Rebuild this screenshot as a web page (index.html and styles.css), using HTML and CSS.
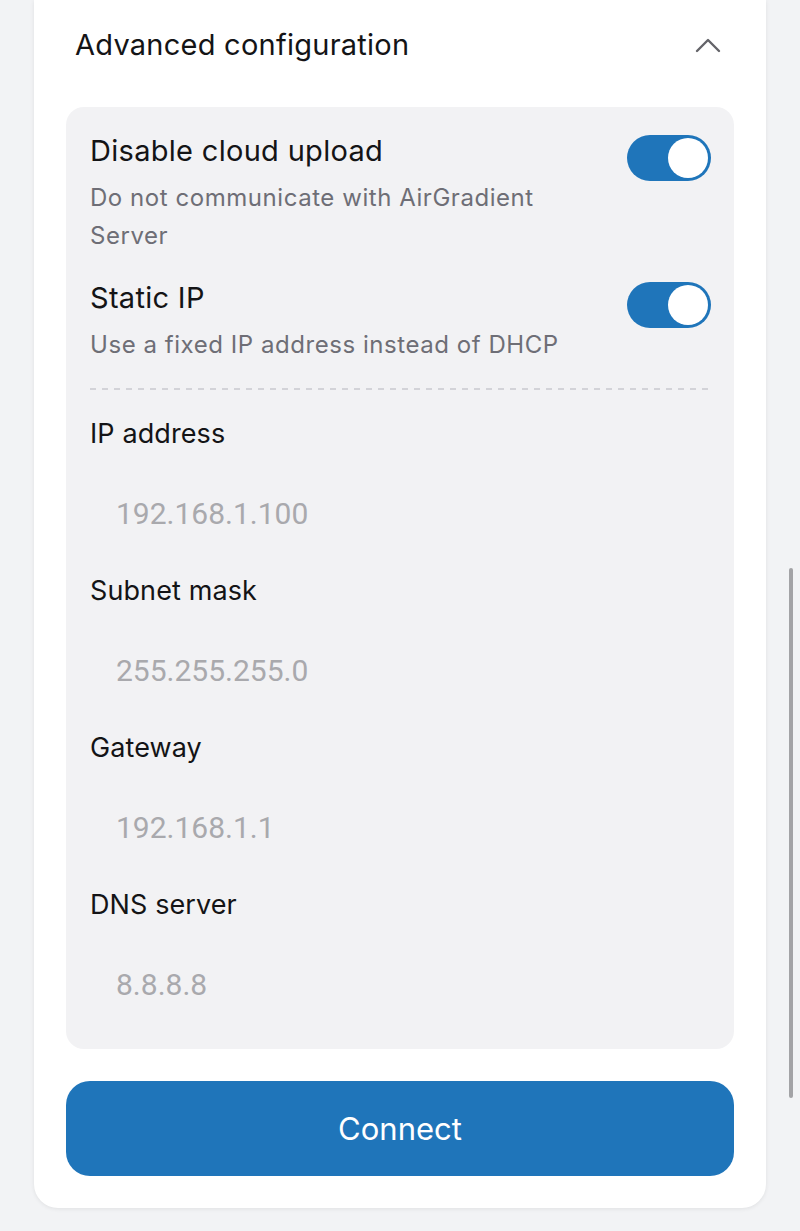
FILE: index.html
```html
<!DOCTYPE html>
<html lang="en">
<head>
  <meta charset="UTF-8" />
  <title>Advanced configuration</title>
  <link rel="stylesheet" href="styles.css">
</head>
<body>
  <div class="card">
    <div class="section-head">
      <span class="section-title">Advanced configuration</span>
      <svg class="chevron" width="26" height="18" viewBox="0 0 26 18">
        <path d="M2 15 L13 4 L24 15" fill="none" stroke="#646469" stroke-width="2.4" stroke-linecap="round" stroke-linejoin="round"/>
      </svg>
    </div>

    <div class="panel">
      <div class="setting">
        <div class="setting-text">
          <div class="setting-title">Disable cloud upload</div>
          <div class="setting-desc">Do not communicate with AirGradient Server</div>
        </div>
        <div class="toggle on"><span class="knob"></span></div>
      </div>

      <div class="setting second">
        <div class="setting-text">
          <div class="setting-title">Static IP</div>
          <div class="setting-desc">Use a fixed IP address instead of DHCP</div>
        </div>
        <div class="toggle on"><span class="knob"></span></div>
      </div>

      <div class="divider"></div>

      <div class="field">
        <label class="field-label">IP address</label>
        <input class="field-input" type="text" placeholder="192.168.1.100">
      </div>
      <div class="field">
        <label class="field-label">Subnet mask</label>
        <input class="field-input" type="text" placeholder="255.255.255.0">
      </div>
      <div class="field">
        <label class="field-label">Gateway</label>
        <input class="field-input" type="text" placeholder="192.168.1.1">
      </div>
      <div class="field">
        <label class="field-label">DNS server</label>
        <input class="field-input" type="text" placeholder="8.8.8.8">
      </div>
    </div>

    <button class="connect">Connect</button>
  </div>

  <div class="scrollbar"></div>
</body>
</html>
```

FILE: styles.css
```css
body {
  margin: 0;
  padding: 0 34px 23px;
  background-color: #f2f3f5;
  font-family: Inter, Roboto, "Liberation Sans", sans-serif;
  color: #141416;
}

.card {
  background: #fff;
  border-radius: 0 0 24px 24px;
  box-shadow: 0 1px 4px rgba(0, 0, 0, 0.08);
  padding: 0 32px 32px;
}

.section-head {
  display: flex;
  align-items: center;
  justify-content: space-between;
  height: 89px;
  padding: 0 13px 18px 9px;
}
.section-title {
  font-size: 29px;
  letter-spacing: 0.25px;
}
.chevron { display: block; }

.panel {
  background: #f2f2f4;
  border-radius: 18px;
  padding: 26px 23px 43px 24px;
}

.setting {
  display: flex;
  justify-content: space-between;
  align-items: flex-start;
}
.setting.second { margin-top: 25px; }
.setting-text { width: 480px; }
.setting-title {
  font-size: 29px;
  line-height: 36px;
  letter-spacing: 0.3px;
}
.setting-desc {
  font-size: 24px;
  line-height: 38px;
  color: #6e6e76;
  margin-top: 10px;
  letter-spacing: 0.55px;
}

.toggle {
  width: 84px;
  height: 46px;
  border-radius: 23px;
  background: #1f75ba;
  position: relative;
  flex-shrink: 0;
  margin-top: 2px;
}
.toggle .knob {
  position: absolute;
  top: 3px;
  right: 3px;
  width: 40px;
  height: 40px;
  border-radius: 50%;
  background: #fff;
}

.divider {
  height: 2px;
  margin-top: 24px;
  background: repeating-linear-gradient(90deg, #d3d3d8 0 6px, transparent 6px 12px);
}

.field {
  display: flex;
  flex-direction: column;
}
.field-label {
  font-size: 27px;
  line-height: 36px;
  margin-top: 26px;
  letter-spacing: 0.1px;
}
.field-input {
  font-family: Roboto, sans-serif;
  font-size: 30px;
  border: none;
  background: transparent;
  padding: 0 26px;
  height: 44px;
  margin-top: 39px;
  outline: none;
}
.field-input::placeholder { color: #a9a9ad; }
.field + .field .field-label { margin-top: 38px; }

.connect {
  display: block;
  width: 100%;
  margin-top: 32px;
  height: 95px;
  border: none;
  border-radius: 24px;
  background: #1f75ba;
  color: #fff;
  font-family: inherit;
  font-size: 31px;
}

.scrollbar {
  position: fixed;
  right: 7px;
  top: 568px;
  width: 4px;
  height: 530px;
  border-radius: 2px;
  background: #a3a3a6;
}
```
